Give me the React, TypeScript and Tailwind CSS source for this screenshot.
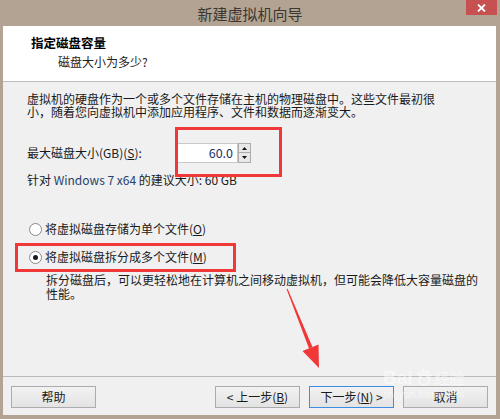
import React from "react";

const font = { fontFamily: '"Noto Sans CJK SC", "Noto Sans", sans-serif' };

const Btn = ({ children, primary = false }: { children: React.ReactNode; primary?: boolean }) => (
  <div
    className={`w-[85px] h-[22px] flex items-center justify-center text-[12px] text-[#1a1a1a] border bg-gradient-to-b from-[#f2f2f2] to-[#e3e3e3] ${
      primary ? "border-[#3c8ee0]" : "border-[#acacac]"
    }`}
  >
    {children}
  </div>
);

const Radio = ({ checked = false }: { checked?: boolean }) => (
  <span className="w-[13px] h-[13px] rounded-full border border-[#8a8a8a] bg-white flex items-center justify-center shrink-0">
    {checked && <span className="w-[5px] h-[5px] rounded-full bg-[#1a1a1a]" />}
  </span>
);

export default function App() {
  return (
    <div className="relative w-[500px] h-[419px] bg-[#b3a392] flex flex-col overflow-hidden" style={font}>
      {/* Title bar */}
      <div className="relative h-[26px] flex items-center justify-center shrink-0">
        <span className="text-[15px] text-[#3b3630] leading-none">新建虚拟机向导</span>
        <div className="absolute right-[3px] top-0 w-[31px] h-[15px] bg-[#c75050] flex items-center justify-center">
          <svg width="9" height="8" viewBox="0 0 9 8">
            <path d="M1 0.5 L8 7.5 M8 0.5 L1 7.5" stroke="#fff" strokeWidth="1.8" />
          </svg>
        </div>
      </div>

      <div className="flex-1 ml-[3px] mr-[4px] mb-[4px] flex flex-col bg-[#f0f0f0]">
        {/* Header */}
        <div className="h-[56px] bg-white border-b border-[#bdbdbd] shrink-0 pl-[28px] pt-[9px]">
          <div className="text-[12.5px] font-bold text-black leading-[16px]">指定磁盘容量</div>
          <div className="text-[12px] text-[#222] leading-[16px] mt-[3px] pl-[27px]">磁盘大小为多少?</div>
        </div>

        {/* Body */}
        <div className="flex-1 flex flex-col pl-[24px] pr-[8px] text-[12px] text-[#1a1a1a]">
          <div className="mt-[10px] leading-[13px]">
            <div>虚拟机的硬盘作为一个或多个文件存储在主机的物理磁盘中。这些文件最初很</div>
            <div>小，随着您向虚拟机中添加应用程序、文件和数据而逐渐变大。</div>
          </div>

          <div className="mt-[25px] flex items-center h-[20px]">
            <span className="w-[150px] leading-none">
              最大磁盘大小(GB)(<span className="underline">S</span>):
            </span>
            <div className="flex h-[20px]">
              <div className="w-[61px] h-[20px] bg-white border border-[#c8c8c8] flex items-center justify-end pr-[4px] text-[12.5px] text-[#1c2f66]">
                60.0
              </div>
              <div className="w-[13px] flex flex-col">
                <div className="h-[10px] border border-[#acacac] bg-[#e8e8e8] flex items-center justify-center">
                  <svg width="5" height="3" viewBox="0 0 5 3"><path d="M0 3 L2.5 0 L5 3Z" fill="#111" /></svg>
                </div>
                <div className="h-[10px] border border-t-0 border-[#acacac] bg-[#e8e8e8] flex items-center justify-center">
                  <svg width="5" height="3" viewBox="0 0 5 3"><path d="M0 0 L2.5 3 L5 0Z" fill="#111" /></svg>
                </div>
              </div>
            </div>
          </div>

          <div className="mt-[10px] leading-[13px]">
            针对 <span className="text-[#26406e]">Windows 7 x64</span> 的建议大小: 60 GB
          </div>

          <div className="mt-[35px] flex items-center gap-[3px] h-[16px] pl-[2px]">
            <Radio />
            <span>
              将虚拟磁盘存储为单个文件(<span className="underline">O</span>)
            </span>
          </div>
          <div className="mt-[12px] flex items-center gap-[3px] h-[16px] pl-[2px]">
            <Radio checked />
            <span>
              将虚拟磁盘拆分成多个文件(<span className="underline">M</span>)
            </span>
          </div>
          <div className="mt-[8px] pl-[19px] leading-[14px]">
            <div>拆分磁盘后，可以更轻松地在计算机之间移动虚拟机，但可能会降低大容量磁盘的</div>
            <div>性能。</div>
          </div>
        </div>

        {/* Footer */}
        <div className="h-[39px] shrink-0 border-t border-[#b9b9b9] flex items-start pt-[9px] px-[8px]">
          <Btn>帮助</Btn>
          <div className="flex-1" />
          <div className="flex gap-[9px]">
            <Btn>
              &lt; 上一步(<span className="underline">B</span>)
            </Btn>
            <Btn primary>
              下一步(<span className="underline">N</span>) &gt;
            </Btn>
            <Btn>取消</Btn>
          </div>
        </div>
      </div>

      {/* Red annotations */}
      <div className="absolute left-[175px] top-[127px] w-[107px] h-[50px] border-[3px] border-[#f03838]" />
      <div className="absolute left-[15px] top-[243px] w-[221px] h-[29px] border-[3px] border-[#f03838]" />
      <svg className="absolute left-0 top-0" width="500" height="419" viewBox="0 0 500 419">
        <polygon points="286.5,289 287.6,288.8 312.5,347 309,348.5" fill="#f03838" />
        <polygon points="302.5,351 318.5,344.5 319,368" fill="#f03838" />
      </svg>

      {/* Watermark */}
      <div className="absolute left-[383px] top-[368px] flex flex-col items-center text-white opacity-50 leading-none pointer-events-none">
        <div className="flex items-center gap-[2px]">
          <span className="text-[19px] font-bold" style={{ fontFamily: '"Liberation Sans", sans-serif' }}>Bai</span>
          <svg width="18" height="18" viewBox="0 0 18 18">
            <circle cx="9" cy="11" r="5" fill="none" stroke="#fff" strokeWidth="2" />
            <circle cx="4" cy="5" r="1.8" fill="#fff" />
            <circle cx="8" cy="3" r="1.8" fill="#fff" />
            <circle cx="12" cy="3" r="1.8" fill="#fff" />
            <circle cx="15" cy="6" r="1.8" fill="#fff" />
          </svg>
          <span className="text-[15px]">经验</span>
        </div>
        <span className="text-[10px] mt-[3px]" style={{ fontFamily: '"Liberation Sans", sans-serif' }}>jingyan.baidu.com</span>
      </div>
    </div>
  );
}
